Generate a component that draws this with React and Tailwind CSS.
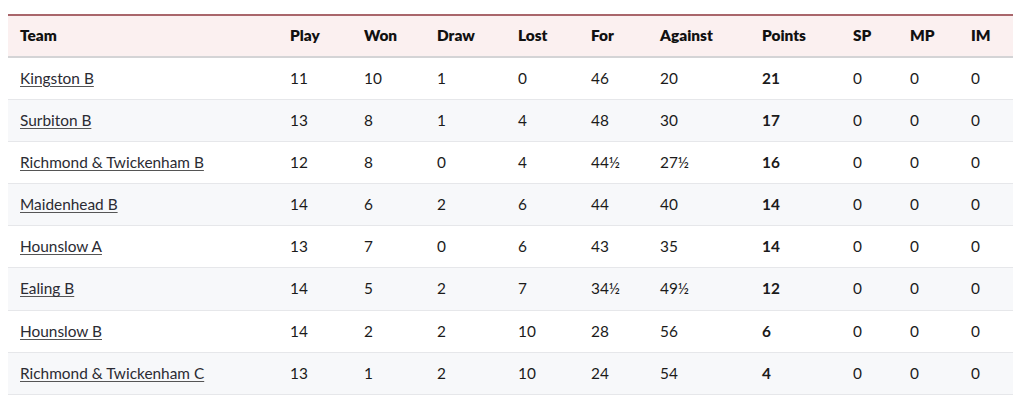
const rows = [
  ['Kingston B', 11, 10, 1, 0, '46', '20', 21],
  ['Surbiton B', 13, 8, 1, 4, '48', '30', 17],
  ['Richmond & Twickenham B', 12, 8, 0, 4, '44½', '27½', 16],
  ['Maidenhead B', 14, 6, 2, 6, '44', '40', 14],
  ['Hounslow A', 13, 7, 0, 6, '43', '35', 14],
  ['Ealing B', 14, 5, 2, 7, '34½', '49½', 12],
  ['Hounslow B', 14, 2, 2, 10, '28', '56', 6],
  ['Richmond & Twickenham C', 13, 1, 2, 10, '24', '54', 4],
];

const headers = ['Team', 'Play', 'Won', 'Draw', 'Lost', 'For', 'Against', 'Points', 'SP', 'MP', 'IM'];
const widths = ['w-[270px]', 'w-[74px]', 'w-[73px]', 'w-[81px]', 'w-[73px]', 'w-[69px]', 'w-[102px]', 'w-[91px]', 'w-[57px]', 'w-[61px]', 'w-[54px]'];

export default function App() {
  return (
    <div className="bg-white w-[1024px] h-[410px] pt-[14px] pl-2" style={{ fontFamily: 'Lato, "Noto Sans", sans-serif' }}>
      <table className="table-fixed border-collapse w-[1005px] text-[15.4px] text-[#1b1b1b]">
        <colgroup>
          {widths.map((w, i) => (
            <col key={i} className={w} />
          ))}
        </colgroup>
        <thead>
          <tr className="bg-[#fbf0f0] border-t-2 border-t-[#a9666b] border-b-2 border-b-[#d4d4d6] h-[42px]">
            {headers.map((h) => (
              <th key={h} className="text-left font-extrabold px-3 py-0 text-[#111]">
                {h}
              </th>
            ))}
          </tr>
        </thead>
        <tbody>
          {rows.map((r, i) => (
            <tr key={r[0]} className={`h-[42.2px] border-b border-[#e6e7ea] ${i % 2 ? 'bg-[#f7f8fa]' : 'bg-white'}`}>
              <td className="px-3">
                <a href="#" className="underline underline-offset-2 decoration-[#555] text-[#2b2b33]">{r[0]}</a>
              </td>
              <td className="px-3">{r[1]}</td>
              <td className="px-3">{r[2]}</td>
              <td className="px-3">{r[3]}</td>
              <td className="px-3">{r[4]}</td>
              <td className="px-3">{r[5]}</td>
              <td className="px-3">{r[6]}</td>
              <td className="px-3 font-bold">{r[7]}</td>
              <td className="px-3">0</td>
              <td className="px-3">0</td>
              <td className="px-3">0</td>
            </tr>
          ))}
        </tbody>
      </table>
    </div>
  );
}
